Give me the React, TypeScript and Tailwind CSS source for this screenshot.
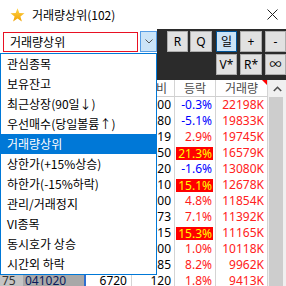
import React from 'react';

const items = [
  '관심종목',
  '보유잔고',
  '최근상장(90일↓)',
  '우선매수(당일볼륨↑)',
  '거래량상위',
  '상한가(+15%상승)',
  '하한가(-15%하락)',
  '관리/거래정지',
  'VI종목',
  '동시호가 상승',
  '시간외 하락',
];

type Row = {
  rank: string;
  code: string;
  price: string;
  diff: string;
  rate: string;
  kind: 'up' | 'down' | 'hot';
  vol: string;
};

const rows: Row[] = [
  { rank: '', code: '', price: '', diff: '200', rate: '-0.3%', kind: 'down', vol: '22198K' },
  { rank: '', code: '', price: '', diff: '280', rate: '-5.1%', kind: 'down', vol: '19833K' },
  { rank: '', code: '', price: '', diff: '19', rate: '2.9%', kind: 'up', vol: '19745K' },
  { rank: '', code: '', price: '', diff: '350', rate: '21.3%', kind: 'hot', vol: '16579K' },
  { rank: '', code: '', price: '', diff: '120', rate: '-1.6%', kind: 'down', vol: '13080K' },
  { rank: '', code: '', price: '', diff: '510', rate: '15.1%', kind: 'hot', vol: '12678K' },
  { rank: '', code: '', price: '', diff: '200', rate: '4.8%', kind: 'up', vol: '11854K' },
  { rank: '', code: '', price: '', diff: '173', rate: '7.1%', kind: 'up', vol: '11392K' },
  { rank: '', code: '', price: '', diff: '715', rate: '15.3%', kind: 'hot', vol: '11165K' },
  { rank: '', code: '', price: '', diff: '300', rate: '1.0%', kind: 'up', vol: '10118K' },
  { rank: '', code: '', price: '', diff: '85', rate: '8.2%', kind: 'up', vol: '9962K' },
  { rank: '75', code: '041020', price: '6720', diff: '120', rate: '1.8%', kind: 'up', vol: '9413K' },
];

function Btn({ label, w, active, className }: { label: string; w: string; active?: boolean; className?: string }) {
  return (
    <div
      className={
        (active
          ? 'bg-[#cce4f7] border border-[#005499] '
          : 'bg-[#e1e1e1] border border-[#adadad] ') +
        w +
        ' h-[21px] flex items-center justify-center text-[12px] leading-none text-black ' +
        (className ?? '')
      }
    >
      {label}
    </div>
  );
}

export default function App() {
  return (
    <div className="w-[286px] h-[286px] overflow-hidden bg-white relative font-['Noto_Sans','Noto_Sans_CJK_KR',sans-serif] text-[12px] text-black">
      {/* Title bar */}
      <div className="h-[29px] flex items-center">
        <svg className="ml-[10px]" width="15" height="14" viewBox="0 0 24 23">
          <defs>
            <linearGradient id="sg" x1="0" y1="0" x2="0" y2="1">
              <stop offset="0" stopColor="#ffd54a" />
              <stop offset="1" stopColor="#f0a000" />
            </linearGradient>
          </defs>
          <polygon
            points="12,0.5 15,8.3 23.5,8.6 16.8,13.9 19.2,22.3 12,17.4 4.8,22.3 7.2,13.9 0.5,8.6 9,8.3"
            fill="url(#sg)"
          />
        </svg>
        <span className="ml-[7px] text-[12px] leading-none font-['Noto_Sans_CJK_KR',sans-serif]">거래량상위(102)</span>
        <svg className="ml-auto mr-[8px]" width="11" height="11" viewBox="0 0 11 11">
          <path d="M0.5 0.5 L10.5 10.5 M10.5 0.5 L0.5 10.5" stroke="#222" strokeWidth="1" />
        </svg>
      </div>

      {/* Toolbar */}
      <div className="h-[51px] flex bg-[#2b2b2b]">
        <div className="w-[157px] bg-white flex items-start pt-[2px] pl-[3px]">
          <div className="mt-[1px] w-[135px] h-[20px] border border-[#e81123] flex items-center pl-[6px] text-[12px] leading-none font-['Noto_Sans_CJK_KR',sans-serif]">
            거래량상위
          </div>
          <div className="ml-[2px] w-[17px] h-[21px] bg-[#cce4f7] border border-[#569de5] flex items-center justify-center">
            <svg width="8" height="5" viewBox="0 0 8 5">
              <path d="M0.5 0.5 L4 4 L7.5 0.5" fill="none" stroke="#555" strokeWidth="1" />
            </svg>
          </div>
        </div>
        <div className="flex-1 pl-[10px] pt-[2px] flex flex-col gap-[2px]">
          <div className="flex">
            <Btn label="R" w="w-[21px]" />
            <Btn label="Q" w="w-[22px]" className="ml-[2px]" />
            <Btn label="일" w="w-[21px]" active className="ml-[4px]" />
            <Btn label="+" w="w-[22px]" className="ml-[3px]" />
            <Btn label="-" w="w-[21px]" className="ml-[3px]" />
          </div>
          <div className="flex pl-[49px]">
            <Btn label="V*" w="w-[21px]" />
            <Btn label="R*" w="w-[22px]" className="ml-[3px]" />
            <Btn label="∞" w="w-[21px]" className="ml-[3px]" />
          </div>
        </div>
      </div>

      {/* Table */}
      <div className="flex">
        <div className="w-[268px]">
          <div className="h-[17px] flex border-b border-[#d0d0d0] text-[#4a4a4a] font-['Noto_Sans_CJK_KR',sans-serif]">
            <div className="w-[23px] border-r border-[#d4d4d4]" />
            <div className="w-[61px] border-r border-[#d4d4d4]" />
            <div className="w-[48px] border-r border-[#d4d4d4]" />
            <div className="w-[43px] border-r border-[#d4d4d4] flex items-center justify-center leading-none pl-[6px]">대비</div>
            <div className="w-[41px] border-r border-[#d4d4d4] flex items-center justify-center leading-none">등락</div>
            <div className="w-[52px] border-r border-[#d4d4d4] flex items-center justify-center leading-none relative">
              거래량
              <div className="absolute right-0 top-0 w-0 h-0 border-t-[5px] border-t-[#ff0000] border-l-[5px] border-l-transparent" />
            </div>
          </div>
          {rows.map((r, i) => (
            <div key={i} className="h-[16px] flex leading-[16px]">
              <div className="w-[23px] bg-[#c4c4c4] text-[#333] pl-[2px]">{r.rank}</div>
              <div className="w-[61px] bg-[#a8a8a8] text-[#0a1a5a] pl-[2px]">{r.code}</div>
              <div
                className={
                  'w-[48px] border-r border-[#d4d4d4] text-right pr-[4px] ' +
                  (i === rows.length - 1 ? 'border-l-2 border-l-[#2f6fd0]' : '')
                }
              >
                {r.price}
              </div>
              <div className="w-[43px] border-r border-[#d4d4d4] text-right pr-[3px]">{r.diff}</div>
              <div className="w-[41px] border-r border-[#d4d4d4] flex items-center justify-end">
                {r.kind === 'hot' ? (
                  <span className="mr-[2px] h-[13px] w-[37px] bg-[#ff0000] text-[#ffff00] leading-[13px] text-right pr-[1px]">
                    {r.rate}
                  </span>
                ) : (
                  <span className={'pr-[3px] ' + (r.kind === 'down' ? 'text-[#0000ff]' : 'text-[#ff1a1a]')}>
                    {r.rate}
                  </span>
                )}
              </div>
              <div className="w-[52px] border-r border-[#d4d4d4] text-right pr-[3px] text-[#ff2020]">{r.vol}</div>
            </div>
          ))}
        </div>
        {/* Scrollbar */}
        <div className="w-[18px] bg-[#f0f0f0] flex flex-col h-[206px]">
          <div className="h-[17px] flex items-center justify-center">
            <svg width="9" height="6" viewBox="0 0 9 6">
              <path d="M0.8 5 L4.5 1.3 L8.2 5" fill="none" stroke="#505050" strokeWidth="1.6" />
            </svg>
          </div>
          <div className="flex-1 ml-[1px] mr-[3px] bg-[#cdcdcd]" />
        </div>
      </div>

      {/* Dropdown list */}
      <div className="absolute left-0 top-[53px] w-[157px] border border-[#0078d7] bg-white font-['Noto_Sans_CJK_KR',sans-serif]">
        {items.map((t, i) => (
          <div
            key={i}
            className={
              'h-[20px] flex items-center pl-[6px] text-[12px] leading-none ' +
              (i === 4 ? 'bg-[#0078d7] text-white' : 'text-black')
            }
          >
            {t}
          </div>
        ))}
      </div>
    </div>
  );
}
